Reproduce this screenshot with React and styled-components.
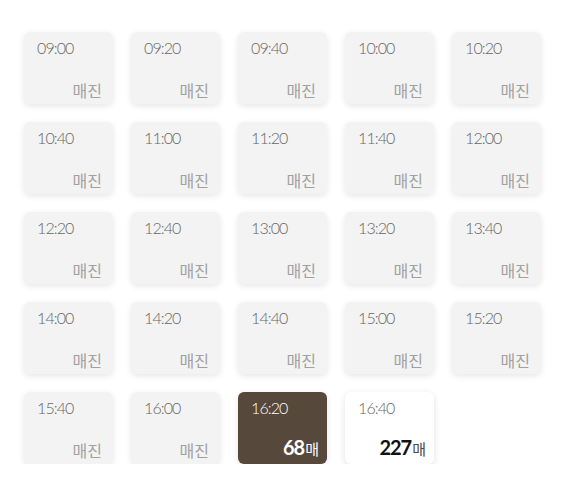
import React from "react";
import styled, { createGlobalStyle, css } from "styled-components";

const Global = createGlobalStyle`
  html, body { margin: 0; padding: 0; background: #fff; }
  body { font-family: Lato, "Noto Sans CJK KR", sans-serif; }
`;

const Grid = styled.div`
  display: grid;
  grid-template-columns: repeat(5, 89px);
  grid-auto-rows: 72px;
  column-gap: 18px;
  row-gap: 18px;
  padding: 32px 0 0 24px;
`;

const Card = styled.div`
  box-sizing: border-box;
  border-radius: 6px;
  padding: 6px 8px 3px 13px;
  display: flex;
  flex-direction: column;
  justify-content: space-between;
  background: #f3f3f3;
  box-shadow: 0 2px 6px rgba(0, 0, 0, 0.1);
  ${(p) =>
    p.$variant === "selected" &&
    css`
      background: #57483c;
    `}
  ${(p) =>
    p.$variant === "open" &&
    css`
      background: #fff;
      box-shadow: 0 2px 7px rgba(0, 0, 0, 0.12);
    `}
`;

const Time = styled.div`
  font-family: Lato, sans-serif;
  font-weight: 300;
  font-size: 16px;
  line-height: 20px;
  letter-spacing: -0.9px;
  color: ${(p) => (p.$variant === "selected" ? "#fff" : "#666")};
`;

const Status = styled.div`
  align-self: flex-end;
  margin-right: 3px;
  font-family: "Noto Sans CJK KR", sans-serif;
  font-size: 16px;
  color: #a0a0a0;
  line-height: 22px;
`;

const Seats = styled.div`
  align-self: flex-end;
  display: flex;
  align-items: baseline;
  line-height: 24px;
  color: ${(p) => (p.$variant === "selected" ? "#fff" : "#111")};
`;

const Count = styled.span`
  font-family: Lato, sans-serif;
  font-weight: 700;
  font-size: 20px;
  letter-spacing: -1px;
`;

const Unit = styled.span`
  font-family: "Noto Sans CJK KR", sans-serif;
  font-size: 15px;
  margin-left: 1px;
  color: ${(p) => (p.$variant === "selected" ? "#fff" : "#4a4a4a")};
`;

const times = [
  "09:00", "09:20", "09:40", "10:00", "10:20",
  "10:40", "11:00", "11:20", "11:40", "12:00",
  "12:20", "12:40", "13:00", "13:20", "13:40",
  "14:00", "14:20", "14:40", "15:00", "15:20",
  "15:40", "16:00",
];

const slots = [
  ...times.map((t) => ({ time: t, variant: "soldout" })),
  { time: "16:20", variant: "selected", seats: 68 },
  { time: "16:40", variant: "open", seats: 227 },
];

export default function App() {
  return (
    <>
      <Global />
      <Grid>
        {slots.map((s) => (
          <Card key={s.time} $variant={s.variant}>
            <Time $variant={s.variant}>{s.time}</Time>
            {s.variant === "soldout" ? (
              <Status>매진</Status>
            ) : (
              <Seats $variant={s.variant}>
                <Count>{s.seats}</Count>
                <Unit $variant={s.variant}>매</Unit>
              </Seats>
            )}
          </Card>
        ))}
      </Grid>
    </>
  );
}
